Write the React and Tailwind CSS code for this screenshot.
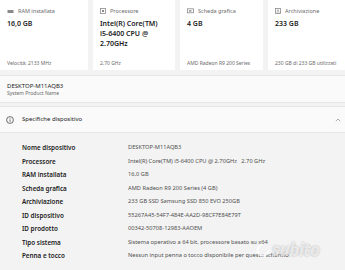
import React from "react";

const font = { fontFamily: '"Noto Sans", "Open Sans", sans-serif' };

function RamIcon() {
  return (
    <svg width="7" height="5" viewBox="0 0 7 5" className="shrink-0">
      <rect x="0.5" y="1" width="6" height="3" fill="#8a8a8a" />
    </svg>
  );
}
function CpuIcon() {
  return (
    <svg width="6" height="6" viewBox="0 0 6 6" className="shrink-0">
      <rect x="0.5" y="0.5" width="5" height="5" fill="none" stroke="#8a8a8a" strokeWidth="0.8" />
      <rect x="2" y="2" width="2" height="2" fill="#8a8a8a" />
    </svg>
  );
}
function GpuIcon() {
  return (
    <svg width="7" height="6" viewBox="0 0 7 6" className="shrink-0">
      <rect x="0.5" y="0.8" width="6" height="4" fill="none" stroke="#8a8a8a" strokeWidth="0.8" />
      <rect x="2" y="2.2" width="2.5" height="1.4" fill="#8a8a8a" />
    </svg>
  );
}
function DiskIcon() {
  return (
    <svg width="6" height="6" viewBox="0 0 6 6" className="shrink-0">
      <rect x="0.5" y="0.5" width="5" height="5" fill="none" stroke="#8a8a8a" strokeWidth="0.8" />
      <line x1="1.5" y1="4" x2="4.5" y2="4" stroke="#8a8a8a" strokeWidth="0.7" />
      <circle cx="3" cy="2.2" r="0.8" fill="#8a8a8a" />
    </svg>
  );
}

function Card({ icon, label, value, foot, className }) {
  return (
    <div className={`bg-white h-[70px] px-[7px] pt-[6px] pb-[3px] flex flex-col ${className}`}>
      <div className="flex items-center gap-[4px] h-[10px] text-[5.5px] text-[#6b6b6b]">
        {icon}
        <span>{label}</span>
      </div>
      <div className="mt-[3px] text-[7px] leading-[10px] font-semibold text-[#1b1b1b]">{value}</div>
      <div className="mt-auto text-[5px] leading-[8px] text-[#6b6b6b] whitespace-nowrap">{foot}</div>
    </div>
  );
}

const specs = [
  ["Nome dispositivo", "DESKTOP-M11AQB3"],
  ["Processore", "Intel(R) Core(TM) i5-6400 CPU @ 2.70GHz   2.70 GHz"],
  ["RAM installata", "16,0 GB"],
  ["Scheda grafica", "AMD Radeon R9 200 Series (4 GB)"],
  ["Archiviazione", "233 GB SSD Samsung SSD 850 EVO 250GB"],
  ["ID dispositivo", "55267A45-54F7-484E-AA2D-98CF7E84E79T"],
  ["ID prodotto", "00342-50708-12983-AAOEM"],
  ["Tipo sistema", "Sistema operativo a 64 bit, processore basato su x64"],
  ["Penna e tocco", "Nessun input penna o tocco disponibile per questo schermo"],
];

export default function App() {
  return (
    <div className="relative w-[345px] h-[270px] overflow-hidden bg-[#f3f3f3]" style={font}>
      <div className="flex gap-[5px]">
        <Card className="w-[88px]" icon={<RamIcon />} label="RAM installata" value="16,0 GB" foot="Velocità: 2133 MHz" />
        <Card
          className="w-[82px]"
          icon={<CpuIcon />}
          label="Processore"
          value={
            <>
              Intel(R) Core(TM)
              <br />
              i5-6400 CPU @
              <br />
              2.70GHz
            </>
          }
          foot="2.70 GHz"
        />
        <Card className="w-[83px]" icon={<GpuIcon />} label="Scheda grafica" value="4 GB" foot="AMD Radeon R9 200 Series" />
        <Card className="flex-1" icon={<DiskIcon />} label="Archiviazione" value="233 GB" foot="230 GB di 233 GB utilizzati" />
      </div>

      <div className="mt-[5px] h-[28px] bg-[#fafafa] border-t border-b border-[#e6e6e6] px-[7px] flex flex-col justify-center">
        <div className="text-[6px] leading-[8px] text-[#1b1b1b]">DESKTOP-M11AQB3</div>
        <div className="text-[5px] leading-[7px] text-[#6b6b6b]">System Product Name</div>
      </div>

      <div className="mt-[3px] h-[27px] bg-[#fafafa] border-t border-b border-[#e6e6e6] pl-[6px] pr-[4px] flex items-center">
        <svg width="8" height="8" viewBox="0 0 8 8" className="shrink-0">
          <circle cx="4" cy="4" r="3.4" fill="none" stroke="#333" strokeWidth="0.7" />
          <line x1="4" y1="3.4" x2="4" y2="5.8" stroke="#333" strokeWidth="0.7" />
          <circle cx="4" cy="2.3" r="0.45" fill="#333" />
        </svg>
        <span className="ml-[8px] text-[6px] text-[#1b1b1b]">Specifiche dispositivo</span>
        <svg width="6" height="4" viewBox="0 0 6 4" className="ml-auto">
          <path d="M0.8 3.2 L3 1 L5.2 3.2" fill="none" stroke="#777" strokeWidth="0.6" />
        </svg>
      </div>

      <div className="pt-[8px] pl-[22px] grid grid-cols-[106px_1fr]">
        {specs.map(([k, v]) => (
          <React.Fragment key={k}>
            <div className="h-[13.5px] flex items-center text-[6.3px] font-semibold text-[#1b1b1b] whitespace-nowrap">{k}</div>
            <div className="h-[13.5px] flex items-center text-[5.7px] text-[#505050] whitespace-pre">{v}</div>
          </React.Fragment>
        ))}
      </div>

      <div className="absolute left-[256px] top-[241px] flex items-center gap-[2px] text-white/70 [text-shadow:0_0_2px_rgba(0,0,0,0.3)]">
        <svg width="14" height="14" viewBox="0 0 14 14">
          <path d="M7 1.5 A5.5 5.5 0 1 0 12.5 7" fill="none" stroke="rgba(255,255,255,0.75)" strokeWidth="2.2" />
        </svg>
        <span className="text-[17px] leading-[18px] font-bold italic tracking-[-0.5px]">subito</span>
      </div>
    </div>
  );
}
